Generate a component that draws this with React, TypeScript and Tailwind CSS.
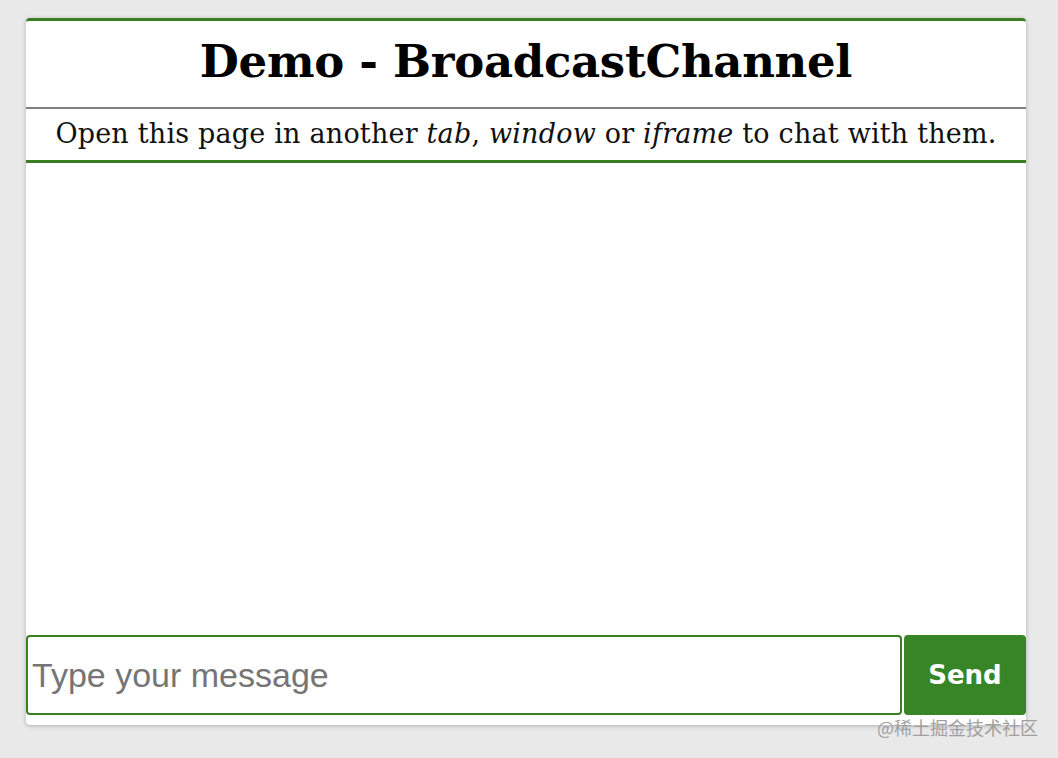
export default function App() {
  return (
    <div className="relative min-h-[758px] w-full bg-[#e9e9e9] pt-[18px]">
      <div className="ml-[26px] flex h-[707px] w-[1000px] flex-col overflow-hidden rounded-[4px] border-t-[3px] border-[#3b7d23] bg-white shadow-[0_1px_4px_rgba(0,0,0,0.25)]">
        {/* header */}
        <div className="flex h-[88px] items-center justify-center border-b-2 border-[#808080] pb-[4px]">
          <h1 className="text-[45px] font-bold text-black [font-family:'DejaVu_Serif',serif] tracking-[-0.3px]">
            Demo - BroadcastChannel
          </h1>
        </div>
        <div className="flex h-[54px] items-center justify-center border-b-[3px] border-[#3b7d23]">
          <p className="text-[27px] text-[#111] [font-family:'DejaVu_Serif',serif] tracking-[0.2px]">
            Open this page in another <i>tab</i>, <i>window</i> or <i>iframe</i> to chat with them.
          </p>
        </div>

        {/* messages */}
        <div className="flex-1"></div>

        {/* composer */}
        <form className="mb-[10px] flex h-[80px] gap-[2px]">
          <input
            type="text"
            placeholder="Type your message"
            className="h-full flex-1 rounded-[4px] border-2 border-[#3b7d23] pl-[4px] pr-[5px] text-[34px] outline-none placeholder:text-[#757575] [font-family:'Liberation_Sans',Arial,sans-serif]"
          />
          <button
            type="button"
            className="h-full w-[122px] rounded-[4px] bg-[#388527] text-[26px] font-bold text-white [font-family:'DejaVu_Sans',sans-serif]"
          >
            Send
          </button>
        </form>
      </div>

      <div className="absolute left-[877px] top-[714px] text-[18px] text-[#a0a0a0] [font-family:'Noto_Sans_CJK_SC',sans-serif]">
        @稀土掘金技术社区
      </div>
    </div>
  );
}
